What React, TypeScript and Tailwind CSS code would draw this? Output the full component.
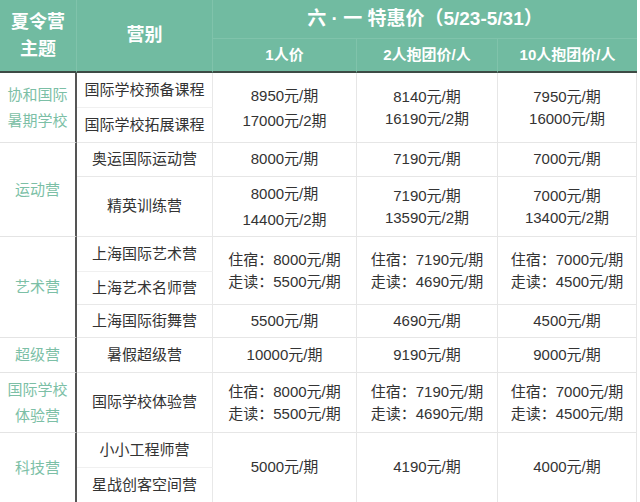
import React from "react";

type CellProps = {
  className?: string;
  children?: React.ReactNode;
};

function Cell({ className = "", children }: CellProps) {
  return (
    <div className={`flex flex-col items-center justify-center text-center ${className}`}>
      {children}
    </div>
  );
}

// body cell styles
const theme = "border-r-2 border-r-[#555] border-b border-b-[#e4e4e4] text-[#7cbfa6] leading-[26px]";
const camp = "border-r border-b border-[#e8e8e8] text-[#333]";
const price = "border-r border-b border-[#e6e6e6] text-[#333]";
const head = "bg-[#71bba1] text-white font-bold border-r border-[#80c3ab]";

export default function App() {
  return (
    <div className="w-[640px] h-[502px] overflow-hidden bg-white font-['Liberation_Sans','Noto_Sans_CJK_SC',sans-serif]">
      <div className="grid w-[637px] grid-cols-[77px_136px_144px_141px_139px] grid-rows-[39px_34px_35px_35px_34px_60px_35px_33px_33px_35px_60px_35px_34px] text-[15px]">
        {/* Header */}
        <Cell className={`${head} col-start-1 row-start-1 row-span-2 text-[18px] leading-[27px] border-b-2 border-b-[#3d4b45]`}>
          <span>夏令营</span>
          <span>主题</span>
        </Cell>
        <Cell className={`${head} col-start-2 row-start-1 row-span-2 text-[18px] border-b-2 border-b-[#3d4b45]`}>
          营别
        </Cell>
        <Cell className={`${head} col-start-3 col-span-3 row-start-1 text-[19px] border-b border-b-[#80c3ab] border-r-0`}>
          六 · 一 特惠价（5/23-5/31）
        </Cell>
        <Cell className={`${head} col-start-3 row-start-2 border-b-2 border-b-[#3d4b45]`}>1人价</Cell>
        <Cell className={`${head} col-start-4 row-start-2 border-b-2 border-b-[#3d4b45]`}>2人抱团价/人</Cell>
        <Cell className={`${head} col-start-5 row-start-2 border-b-2 border-b-[#3d4b45] border-r-0`}>10人抱团价/人</Cell>

        {/* 协和国际暑期学校 */}
        <Cell className={`${theme} col-start-1 row-start-3 row-span-2`}>
          <span>协和国际</span>
          <span>暑期学校</span>
        </Cell>
        <Cell className={`${camp} col-start-2 row-start-3 border-b-[#f0f0f0]`}>国际学校预备课程</Cell>
        <Cell className={`${camp} col-start-2 row-start-4`}>国际学校拓展课程</Cell>
        <Cell className={`${price} col-start-3 row-start-3 row-span-2 leading-[25px]`}>
          <span>8950元/期</span>
          <span>17000元/2期</span>
        </Cell>
        <Cell className={`${price} col-start-4 row-start-3 row-span-2 leading-[22px]`}>
          <span>8140元/期</span>
          <span>16190元/2期</span>
        </Cell>
        <Cell className={`${price} col-start-5 row-start-3 row-span-2 leading-[22px]`}>
          <span>7950元/期</span>
          <span>16000元/期</span>
        </Cell>

        {/* 运动营 */}
        <Cell className={`${theme} col-start-1 row-start-5 row-span-2`}>运动营</Cell>
        <Cell className={`${camp} col-start-2 row-start-5`}>奥运国际运动营</Cell>
        <Cell className={`${price} col-start-3 row-start-5`}>8000元/期</Cell>
        <Cell className={`${price} col-start-4 row-start-5`}>7190元/期</Cell>
        <Cell className={`${price} col-start-5 row-start-5`}>7000元/期</Cell>
        <Cell className={`${camp} col-start-2 row-start-6`}>精英训练营</Cell>
        <Cell className={`${price} col-start-3 row-start-6 leading-[26px]`}>
          <span>8000元/期</span>
          <span>14400元/2期</span>
        </Cell>
        <Cell className={`${price} col-start-4 row-start-6 leading-[22px]`}>
          <span>7190元/期</span>
          <span>13590元/2期</span>
        </Cell>
        <Cell className={`${price} col-start-5 row-start-6 leading-[22px]`}>
          <span>7000元/期</span>
          <span>13400元/2期</span>
        </Cell>

        {/* 艺术营 */}
        <Cell className={`${theme} col-start-1 row-start-7 row-span-3`}>艺术营</Cell>
        <Cell className={`${camp} col-start-2 row-start-7 border-b-[#f0f0f0]`}>上海国际艺术营</Cell>
        <Cell className={`${camp} col-start-2 row-start-8`}>上海艺术名师营</Cell>
        <Cell className={`${price} col-start-3 row-start-7 row-span-2 leading-[22px]`}>
          <span>住宿：8000元/期</span>
          <span>走读：5500元/期</span>
        </Cell>
        <Cell className={`${price} col-start-4 row-start-7 row-span-2 leading-[22px]`}>
          <span>住宿：7190元/期</span>
          <span>走读：4690元/期</span>
        </Cell>
        <Cell className={`${price} col-start-5 row-start-7 row-span-2 leading-[22px]`}>
          <span>住宿：7000元/期</span>
          <span>走读：4500元/期</span>
        </Cell>
        <Cell className={`${camp} col-start-2 row-start-9`}>上海国际街舞营</Cell>
        <Cell className={`${price} col-start-3 row-start-9`}>5500元/期</Cell>
        <Cell className={`${price} col-start-4 row-start-9`}>4690元/期</Cell>
        <Cell className={`${price} col-start-5 row-start-9`}>4500元/期</Cell>

        {/* 超级营 */}
        <Cell className={`${theme} col-start-1 row-start-10`}>超级营</Cell>
        <Cell className={`${camp} col-start-2 row-start-10`}>暑假超级营</Cell>
        <Cell className={`${price} col-start-3 row-start-10`}>10000元/期</Cell>
        <Cell className={`${price} col-start-4 row-start-10`}>9190元/期</Cell>
        <Cell className={`${price} col-start-5 row-start-10`}>9000元/期</Cell>

        {/* 国际学校体验营 */}
        <Cell className={`${theme} col-start-1 row-start-11 leading-[22px]`}>
          <span>国际学校</span>
          <span>体验营</span>
        </Cell>
        <Cell className={`${camp} col-start-2 row-start-11`}>国际学校体验营</Cell>
        <Cell className={`${price} col-start-3 row-start-11 leading-[22px]`}>
          <span>住宿：8000元/期</span>
          <span>走读：5500元/期</span>
        </Cell>
        <Cell className={`${price} col-start-4 row-start-11 leading-[22px]`}>
          <span>住宿：7190元/期</span>
          <span>走读：4690元/期</span>
        </Cell>
        <Cell className={`${price} col-start-5 row-start-11 leading-[22px]`}>
          <span>住宿：7000元/期</span>
          <span>走读：4500元/期</span>
        </Cell>

        {/* 科技营 */}
        <Cell className={`${theme} col-start-1 row-start-12 row-span-2 border-b-0`}>科技营</Cell>
        <Cell className={`${camp} col-start-2 row-start-12 border-b-[#f0f0f0]`}>小小工程师营</Cell>
        <Cell className={`${camp} col-start-2 row-start-13 border-b-0`}>星战创客空间营</Cell>
        <Cell className={`${price} col-start-3 row-start-12 row-span-2 border-b-0`}>5000元/期</Cell>
        <Cell className={`${price} col-start-4 row-start-12 row-span-2 border-b-0`}>4190元/期</Cell>
        <Cell className={`${price} col-start-5 row-start-12 row-span-2 border-b-0`}>4000元/期</Cell>
      </div>
    </div>
  );
}
